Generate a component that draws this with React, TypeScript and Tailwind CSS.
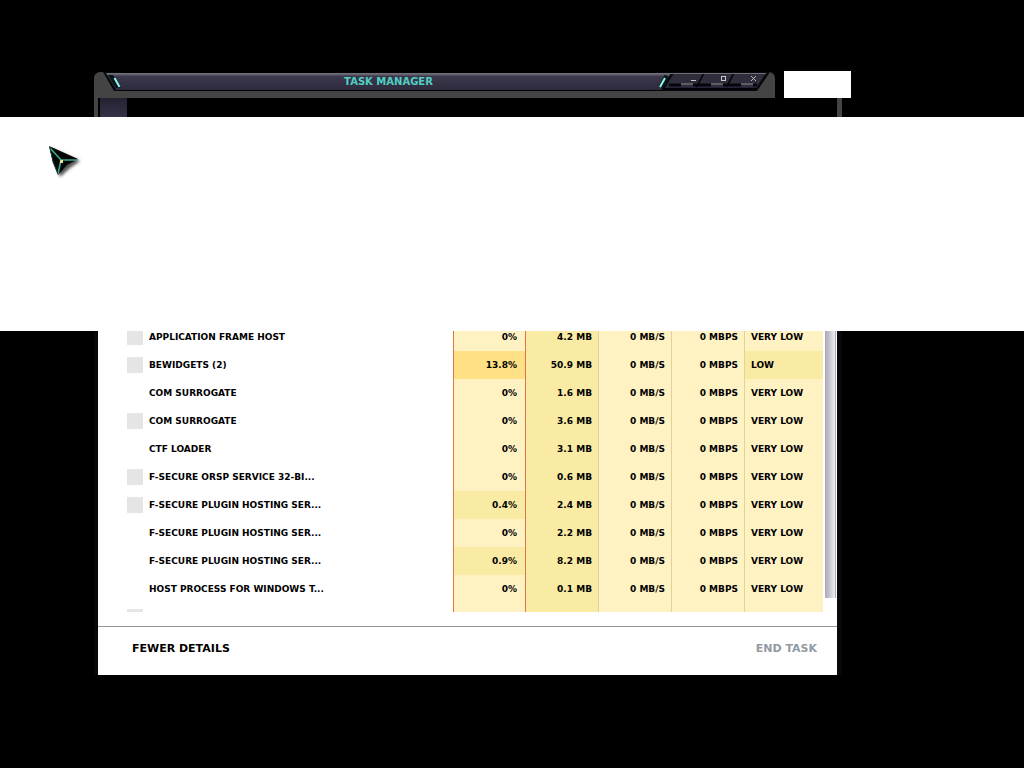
type Process = {
  name: string;
  cpu: string;
  memory: string;
  power?: string;
  icon?: boolean;
  heat?: "low" | "high";
};

const processes: Process[] = [
  { name: "APPLICATION FRAME HOST", cpu: "0%", memory: "4.2 MB", icon: true },
  { name: "BEWIDGETS (2)", cpu: "13.8%", memory: "50.9 MB", power: "LOW", icon: true, heat: "high" },
  { name: "COM SURROGATE", cpu: "0%", memory: "1.6 MB" },
  { name: "COM SURROGATE", cpu: "0%", memory: "3.6 MB", icon: true },
  { name: "CTF LOADER", cpu: "0%", memory: "3.1 MB" },
  { name: "F-SECURE ORSP SERVICE 32-BI...", cpu: "0%", memory: "0.6 MB", icon: true },
  { name: "F-SECURE PLUGIN HOSTING SER...", cpu: "0.4%", memory: "2.4 MB", icon: true, heat: "low" },
  { name: "F-SECURE PLUGIN HOSTING SER...", cpu: "0%", memory: "2.2 MB" },
  { name: "F-SECURE PLUGIN HOSTING SER...", cpu: "0.9%", memory: "8.2 MB", heat: "low" },
  { name: "HOST PROCESS FOR WINDOWS T...", cpu: "0%", memory: "0.1 MB" },
];

const heatClass = {
  none: "bg-[#fff2c2]",
  low: "bg-[#f9eba4]",
  high: "bg-[#ffe085]",
};

function Cursor() {
  return (
    <svg width="34" height="34" viewBox="0 0 34 34" aria-hidden="true">
      <defs>
        <filter id="soft" x="-20%" y="-20%" width="150%" height="150%">
          <feGaussianBlur stdDeviation="1.5" />
        </filter>
      </defs>
      <path d="M3 3L32 16L22 23L12 32Z" fill="#555" filter="url(#soft)" />
      <path d="M1 1L30 14L19 20L10 30L5 17Z" fill="#020706" />
      <path d="M2 3L13 15L29 15M13 15L10 29" fill="none" stroke="#3fa895" strokeWidth="1.6" />
      <path d="M2 3L5 17L10 29" fill="none" stroke="#173f39" strokeWidth="1" />
      <rect x="12" y="15" width="3" height="3" fill="#e5e291" />
    </svg>
  );
}

function TitleBar() {
  return (
    <header className="mt-px flex h-[26px] flex-1 overflow-hidden rounded-t-md bg-[#444444]">
      <svg width="28" height="26" className="shrink-0" aria-hidden="true">
        <defs>
          <linearGradient id="bar" x1="0" y1="0" x2="0" y2="1">
            <stop offset="0.05" stopColor="#706e79" />
            <stop offset="0.2" stopColor="#3c394c" />
            <stop offset="1" stopColor="#2d2a3d" />
          </linearGradient>
        </defs>
        <path d="M9 0H28V19H20Z" fill="#08080c" />
        <path d="M12 1H28V18H22Z" fill="url(#bar)" />
        <path d="M14 3H19L27 16H22Z" fill="#07151a" />
        <path d="M20.500 6L25.500 15" stroke="#8ff5ee" strokeWidth="2" />
      </svg>
      <div className="h-[19px] flex-1 border-y border-black bg-linear-to-b from-[#706e79] from-5% via-[#3c394c] via-20% to-[#2d2a3d] text-center">
        <h1 className="text-[10px] leading-[17px] font-bold text-[#52cfc2]">TASK MANAGER</h1>
      </div>
      <div className="relative w-[120px] shrink-0">
        <svg width="120" height="26" aria-hidden="true">
          <path d="M0 0H115L102 19H0Z" fill="#08080c" />
          <path d="M0 1H16L6 18H0Z" fill="url(#bar)" />
          <path d="M19 1H48L40 16H10Z" fill="#302e3c" />
          <path d="M50 1H78L70 16H42Z" fill="#302e3c" />
          <path d="M80 1H111L101 16H72Z" fill="#302e3c" />
          <path d="M0 1H111V2H0Z" fill="#706e79" />
          <path d="M14 13H26M38 13H56M68 13H86M98 13H102" stroke="#05050e" strokeWidth="3" />
          <path d="M26 12H38M56 12H68M86 12H98" stroke="#5d5c66" strokeWidth="2" />
          <path d="M10 15.500H102" stroke="#25233a" />
          <path d="M8 17H101" stroke="#02020a" strokeWidth="2" />
          <path d="M12 4L6 15" stroke="#07151a" strokeWidth="5" />
          <path d="M10 6L5 15" stroke="#8ff5ee" strokeWidth="2" />
        </svg>
        <div className="absolute top-0 left-[26px] flex h-[13px] gap-[6px]">
          <button aria-label="Minimize" className="flex w-6 items-center justify-center">
            <svg width="7" height="7" aria-hidden="true">
              <path d="M1 5.500H6" stroke="#c7c5ce" />
            </svg>
          </button>
          <button aria-label="Maximize" className="flex w-6 items-center justify-center">
            <svg width="7" height="7" aria-hidden="true">
              <rect x="1.500" y="1.500" width="4" height="4" fill="none" stroke="#c7c5ce" />
            </svg>
          </button>
          <button aria-label="Close" className="flex w-6 items-center justify-center">
            <svg width="7" height="7" aria-hidden="true">
              <path d="M1 1L6 6M6 1L1 6" stroke="#c7c5ce" strokeWidth="0.900" />
            </svg>
          </button>
        </div>
      </div>
    </header>
  );
}

function Row({ p }: { p: Process }) {
  return (
    <tr className="h-7">
      <td className="p-0 pl-[29px] text-left">
        <div className="flex items-center gap-[6px]">
          <span className={p.icon ? "size-4 bg-[#e5e5e5]" : "size-4"} />
          <span>{p.name}</span>
        </div>
      </td>
      <td className={`border-x border-[#df7548] p-0 pr-2 ${heatClass[p.heat ?? "none"]}`}>{p.cpu}</td>
      <td className="border-r border-[#e0d49b] bg-[#f9eba4] p-0 pr-[6px]">{p.memory}</td>
      <td className="border-r border-[#e0d49b] bg-[#fff2c2] p-0 pr-[6px]">0 MB/S</td>
      <td className="border-r border-[#e0d49b] bg-[#fff2c2] p-0 pr-[6px]">0 MBPS</td>
      <td className={`p-0 pl-[6px] text-left ${p.power ? "bg-[#f9eba4]" : "bg-[#fff2c2]"}`}>{p.power ?? "VERY LOW"}</td>
    </tr>
  );
}

function ProcessTable() {
  return (
    <div className="flex h-[281px] overflow-hidden">
      <table aria-label="Processes" className="-mt-2 h-[308px] flex-1 table-fixed border-separate border-spacing-0 text-right text-[9px] leading-3 font-bold whitespace-nowrap">
        <colgroup>
          <col />
          <col className="w-[73px]" />
          <col className="w-[73px]" />
          <col className="w-[73px]" />
          <col className="w-[73px]" />
          <col className="w-[78px]" />
        </colgroup>
        <tbody>
          {processes.map((p, i) => (
            <Row key={i} p={p} />
          ))}
          <tr className="h-7">
            <td className="p-0 pl-[29px]">
              <div className="size-4 bg-[#e5e5e5]" />
            </td>
            <td className="border-x border-[#df7548] bg-[#fff2c2]" />
            <td className="border-r border-[#e0d49b] bg-[#f9eba4]" />
            <td className="border-r border-[#e0d49b] bg-[#fff2c2]" />
            <td className="border-r border-[#e0d49b] bg-[#fff2c2]" />
            <td className="bg-[#fff2c2]" />
          </tr>
        </tbody>
      </table>
      <div className="w-[14px] shrink-0 pr-px pl-[2px]">
        <div className="h-[267px] border-r border-[#aaa8b5] bg-linear-to-r from-[#aaa8b5] via-[#c9c7d2] to-[#efeff5]" />
      </div>
    </div>
  );
}

export default function App() {
  return (
    <div className="min-h-screen bg-black pt-[71px] font-['DejaVu_Sans',sans-serif] text-black">
      <div className="flex gap-[9px] pr-[173px] pl-[94px]">
        <TitleBar />
        <div className="h-[27px] w-[67px] bg-white" />
      </div>
      <div className="pr-[182px] pl-[94px]">
        <div className="h-[19px] border-r-[5px] border-l-4 border-[#444444] pl-[2px]">
          <div className="h-full w-[27px] bg-linear-to-b from-[#242231] to-[#353249]" />
        </div>
      </div>

      <div className="h-[214px] bg-white pt-7 pl-12">
        <Cursor />
      </div>

      <div className="pr-[182px] pl-[94px]">
        <main className="border-r-[5px] border-l-4 border-[#08080b] bg-white">
          <ProcessTable />
          <footer className="mt-[14px] flex h-[49px] items-center justify-between border-t border-[#969696] pr-5 pl-[34px] text-[11px] leading-3">
            <button className="pb-1 font-bold">FEWER DETAILS</button>
            <button disabled className="pb-1 font-bold text-[#929aa3]">END TASK</button>
          </footer>
        </main>
      </div>
    </div>
  );
}
